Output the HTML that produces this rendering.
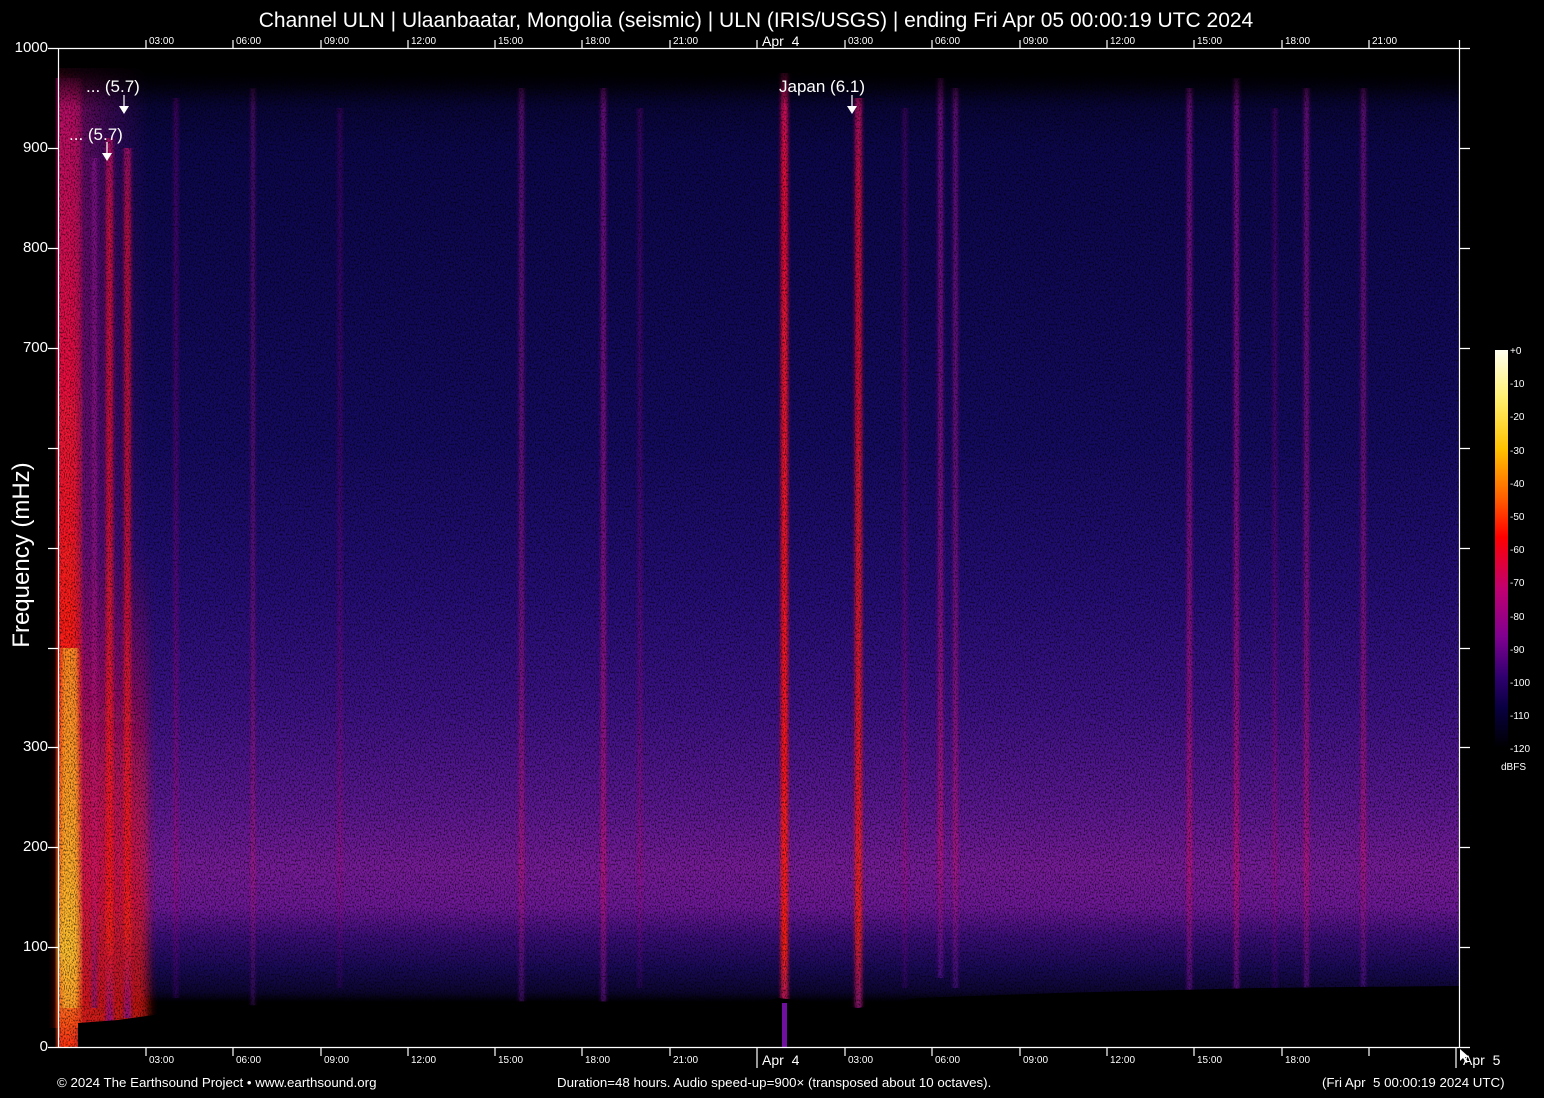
<!DOCTYPE html>
<html><head><meta charset="utf-8"><style>
html,body{margin:0;padding:0;background:#000;}
body{width:1544px;height:1098px;position:relative;overflow:hidden;font-family:"Liberation Sans",Arial,sans-serif;color:#fff;}
.t{position:absolute;white-space:nowrap;}
.tk{position:absolute;font-size:10px;}
.yl{position:absolute;font-size:15px;width:48px;text-align:right;}
</style></head><body>
<div class="t" style="left:0;width:1512px;text-align:center;top:9px;font-size:21px;">Channel ULN | Ulaanbaatar, Mongolia (seismic) | ULN (IRIS/USGS) | ending Fri Apr 05 00:00:19 UTC 2024</div>

<svg style="position:absolute;left:0;top:0" width="1544" height="1098">
<defs>
<linearGradient id="bg" x1="0" y1="0" x2="0" y2="1">
<stop offset="0" stop-color="#000"/>
<stop offset="0.02" stop-color="#000"/>
<stop offset="0.05" stop-color="#080534"/>
<stop offset="0.1" stop-color="#0c074c"/>
<stop offset="0.4" stop-color="#150b62"/>
<stop offset="0.55" stop-color="#260e78"/>
<stop offset="0.66" stop-color="#3c1286"/>
<stop offset="0.76" stop-color="#5c1892"/>
<stop offset="0.82" stop-color="#761c98"/>
<stop offset="0.86" stop-color="#6c1896"/>
<stop offset="0.89" stop-color="#3a0e78"/>
<stop offset="0.92" stop-color="#1a0a58"/>
<stop offset="0.945" stop-color="#0c0630"/>
<stop offset="0.955" stop-color="#000"/>
<stop offset="1" stop-color="#000"/>
</linearGradient>
<linearGradient id="topf" x1="0" y1="0" x2="0" y2="1">
<stop offset="0" stop-color="#000" stop-opacity="1"/>
<stop offset="0.4" stop-color="#000" stop-opacity="0.8"/>
<stop offset="1" stop-color="#000" stop-opacity="0"/>
</linearGradient>
<linearGradient id="lr" x1="0" y1="0" x2="1" y2="0">
<stop offset="0" stop-color="#e01050" stop-opacity="0.7"/>
<stop offset="0.3" stop-color="#c0107a" stop-opacity="0.45"/>
<stop offset="0.7" stop-color="#a0108a" stop-opacity="0.2"/>
<stop offset="1" stop-color="#a0108a" stop-opacity="0"/>
</linearGradient>
<linearGradient id="glow" x1="0" y1="0" x2="0" y2="1">
<stop offset="0" stop-color="#ff1020" stop-opacity="0"/>
<stop offset="0.5" stop-color="#ff1020" stop-opacity="0.5"/>
<stop offset="1" stop-color="#ff2010" stop-opacity="0.75"/>
</linearGradient>
<linearGradient id="yl" x1="0" y1="0" x2="0" y2="1">
<stop offset="0" stop-color="#b0106a"/>
<stop offset="0.3" stop-color="#e81040"/>
<stop offset="0.6" stop-color="#ff2010"/>
<stop offset="0.8" stop-color="#ff8020"/>
<stop offset="0.9" stop-color="#ffc030"/>
<stop offset="1" stop-color="#ff3010"/>
</linearGradient>
<linearGradient id="red" x1="0" y1="0" x2="0" y2="1">
<stop offset="0" stop-color="#c0106a"/>
<stop offset="0.1" stop-color="#e8103a"/>
<stop offset="0.7" stop-color="#ff1818"/>
<stop offset="0.9" stop-color="#ff2010"/>
<stop offset="1" stop-color="#8010a0"/>
</linearGradient>
<linearGradient id="mag" x1="0" y1="0" x2="0" y2="1">
<stop offset="0" stop-color="#a010a0"/>
<stop offset="0.5" stop-color="#b0108a"/>
<stop offset="0.85" stop-color="#d01070"/>
<stop offset="1" stop-color="#6010a0"/>
</linearGradient>
<filter id="nz" x="0" y="0" width="1" height="1">
<feTurbulence type="fractalNoise" baseFrequency="0.8 0.5" numOctaves="2" seed="3"/>
<feColorMatrix values="0 0 0 0 0  0 0 0 0 0  0 0 0 0 0  0 0 0 -3.5 1.9"/>
</filter>
<filter id="bl"><feGaussianBlur stdDeviation="1.8 0"/></filter>
<filter id="bl2"><feGaussianBlur stdDeviation="5 0"/></filter>
</defs>
<g transform="translate(58,48)">
<rect width="1401" height="999" fill="url(#bg)"/>
<rect x="0" y="20" width="90" height="979" fill="url(#lr)"/>
<rect x="0" y="500" width="90" height="480" fill="url(#glow)" filter="url(#bl2)"/>
<rect x="0" y="30" width="22" height="969" fill="url(#yl)" filter="url(#bl2)"/>
<g filter="url(#bl)">
<rect x="2" y="30" width="10" height="969" fill="url(#yl)"/>
<rect x="4" y="600" width="16" height="360" fill="#ffc030" opacity="0.65"/>
<rect x="48" y="90" width="7" height="890" fill="url(#red)" opacity="0.8"/>
<rect x="66" y="100" width="7" height="870" fill="url(#red)" opacity="0.75"/>
<rect x="34" y="110" width="5" height="850" fill="url(#mag)" opacity="0.6"/>
<rect x="723" y="25" width="7" height="974" fill="url(#red)"/>
<rect x="797" y="50" width="7" height="930" fill="url(#red)" opacity="0.85"/>
<rect x="880" y="30" width="5" height="900" fill="url(#mag)" opacity="0.7"/>
<rect x="895" y="40" width="5" height="900" fill="url(#mag)" opacity="0.6"/>
<rect x="1129" y="40" width="5" height="920" fill="url(#mag)" opacity="0.7"/>
<rect x="1176" y="30" width="5" height="940" fill="url(#mag)" opacity="0.75"/>
<rect x="1246" y="40" width="5" height="920" fill="url(#mag)" opacity="0.65"/>
<rect x="1303" y="40" width="5" height="900" fill="url(#mag)" opacity="0.6"/>
<rect x="543" y="40" width="5" height="930" fill="url(#mag)" opacity="0.7"/>
<rect x="461" y="40" width="5" height="920" fill="url(#mag)" opacity="0.55"/>
<rect x="193" y="40" width="4" height="920" fill="url(#mag)" opacity="0.45"/>
<rect x="116" y="50" width="4" height="900" fill="url(#mag)" opacity="0.4"/>
<rect x="580" y="60" width="4" height="880" fill="url(#mag)" opacity="0.35"/>
<rect x="845" y="60" width="4" height="880" fill="url(#mag)" opacity="0.35"/>
<rect x="1215" y="60" width="4" height="880" fill="url(#mag)" opacity="0.35"/>
<rect x="280" y="60" width="4" height="880" fill="url(#mag)" opacity="0.3"/>
</g>
<rect width="1401" height="999" filter="url(#nz)" opacity="0.6"/>
<path d="M20,999 L20,975 L60,972 L110,965 L160,958 L300,955 L500,953 L700,955 L720,950 L740,952 L800,960 L860,950 L1000,945 L1200,940 L1401,938 L1401,999 Z" fill="#000"/>
<rect x="724" y="955" width="5" height="44" fill="#7010a0"/>
<rect x="0" y="0" width="1401" height="60" fill="url(#topf)"/>
</g>
<g stroke="#fff" stroke-width="1.2" fill="none">
<line x1="58" y1="48.5" x2="1470" y2="48.5"/>
<line x1="58" y1="1047.5" x2="1470" y2="1047.5"/>
<line x1="58.5" y1="48" x2="58.5" y2="1048"/>
<line x1="1459.5" y1="40" x2="1459.5" y2="1048"/>
<path d="M48,48.5h10M48,148.5h10M48,248.5h10M48,348.5h10M48,448.5h10M48,548.5h10M48,648.5h10M48,747.5h10M48,847.5h10M48,947.5h10M48,1047.5h10"/>
<path d="M1460,148.5h10M1460,248.5h10M1460,348.5h10M1460,448.5h10M1460,548.5h10M1460,648.5h10M1460,747.5h10M1460,847.5h10M1460,947.5h10"/>
<path d="M146,48v-8M233,48v-8M321,48v-8M408,48v-8M495,48v-8M582,48v-8M670,48v-8M757,48v-8M845,48v-8M932,48v-8M1020,48v-8M1107,48v-8M1194,48v-8M1282,48v-8M1369,48v-8"/>
<path d="M146,1048v8M233,1048v8M321,1048v8M408,1048v8M495,1048v8M582,1048v8M670,1048v8M757,1048v20M845,1048v8M932,1048v8M1020,1048v8M1107,1048v8M1194,1048v8M1282,1048v8M1369,1048v8M1456,1048v20"/>
<path d="M124,95v12M107,142v12M852,95v12"/>
</g>
<g fill="#fff"><path d="M119,106h10l-5,8z M102,153h10l-5,8z M847,106h10l-5,8z M1460,1049l0,12l3,-3l3,5l2,-1l-3,-5l4,0z"/></g>
<defs><linearGradient id="cb" x1="0" y1="0" x2="0" y2="1">
<stop offset="0" stop-color="#fffff0"/><stop offset="0.12" stop-color="#fff070"/><stop offset="0.25" stop-color="#ffc000"/>
<stop offset="0.37" stop-color="#ff6000"/><stop offset="0.47" stop-color="#ff0000"/><stop offset="0.6" stop-color="#c00070"/>
<stop offset="0.72" stop-color="#800090"/><stop offset="0.82" stop-color="#300070"/><stop offset="0.9" stop-color="#080040"/><stop offset="1" stop-color="#000"/></linearGradient></defs>
<rect x="1495" y="350" width="13" height="398" fill="url(#cb)"/>
</svg>

<div class="yl" style="left:0;top:39px">1000</div>
<div class="yl" style="left:0;top:139px">900</div>
<div class="yl" style="left:0;top:239px">800</div>
<div class="yl" style="left:0;top:339px">700</div>
<div class="yl" style="left:0;top:738px">300</div>
<div class="yl" style="left:0;top:838px">200</div>
<div class="yl" style="left:0;top:938px">100</div>
<div class="yl" style="left:0;top:1038px">0</div>
<div class="t" style="left:22px;top:555px;font-size:24px;transform:translate(-50%,-50%) rotate(-90deg);">Frequency (mHz)</div>

<div class="tk" style="left:149px;top:36px">03:00</div><div class="tk" style="left:236px;top:36px">06:00</div><div class="tk" style="left:324px;top:36px">09:00</div><div class="tk" style="left:411px;top:36px">12:00</div><div class="tk" style="left:498px;top:36px">15:00</div><div class="tk" style="left:585px;top:36px">18:00</div><div class="tk" style="left:673px;top:36px">21:00</div><div class="tk" style="left:762px;top:33px;font-size:14px">Apr&nbsp; 4</div><div class="tk" style="left:848px;top:36px">03:00</div><div class="tk" style="left:935px;top:36px">06:00</div><div class="tk" style="left:1023px;top:36px">09:00</div><div class="tk" style="left:1110px;top:36px">12:00</div><div class="tk" style="left:1197px;top:36px">15:00</div><div class="tk" style="left:1285px;top:36px">18:00</div><div class="tk" style="left:1372px;top:36px">21:00</div>

<div class="tk" style="left:149px;top:1055px">03:00</div><div class="tk" style="left:236px;top:1055px">06:00</div><div class="tk" style="left:324px;top:1055px">09:00</div><div class="tk" style="left:411px;top:1055px">12:00</div><div class="tk" style="left:498px;top:1055px">15:00</div><div class="tk" style="left:585px;top:1055px">18:00</div><div class="tk" style="left:673px;top:1055px">21:00</div><div class="tk" style="left:762px;top:1052px;font-size:14px">Apr&nbsp; 4</div><div class="tk" style="left:848px;top:1055px">03:00</div><div class="tk" style="left:935px;top:1055px">06:00</div><div class="tk" style="left:1023px;top:1055px">09:00</div><div class="tk" style="left:1110px;top:1055px">12:00</div><div class="tk" style="left:1197px;top:1055px">15:00</div><div class="tk" style="left:1285px;top:1055px">18:00</div><div class="tk" style="left:1463px;top:1052px;font-size:14px">Apr&nbsp; 5</div>

<div class="t" style="left:86px;top:77px;font-size:17px">... (5.7)</div>
<div class="t" style="left:69px;top:125px;font-size:17px">... (5.7)</div>
<div class="t" style="left:779px;top:77px;font-size:17px">Japan (6.1)</div>

<div class="tk" style="left:1510px;top:335px;font-size:10px;line-height:33.2px">+0<br>-10<br>-20<br>-30<br>-40<br>-50<br>-60<br>-70<br>-80<br>-90<br>-100<br>-110<br>-120</div>
<div class="tk" style="left:1501px;top:762px;font-size:10px">dBFS</div>

<div class="t" style="left:57px;top:1075px;font-size:13.3px">© 2024 The Earthsound Project • www.earthsound.org</div>
<div class="t" style="left:557px;top:1075px;font-size:13.3px">Duration=48 hours. Audio speed-up=900× (transposed about 10 octaves).</div>
<div class="t" style="left:1322px;top:1075px;font-size:13.3px">(Fri Apr&nbsp; 5 00:00:19 2024 UTC)</div>
</body></html>
